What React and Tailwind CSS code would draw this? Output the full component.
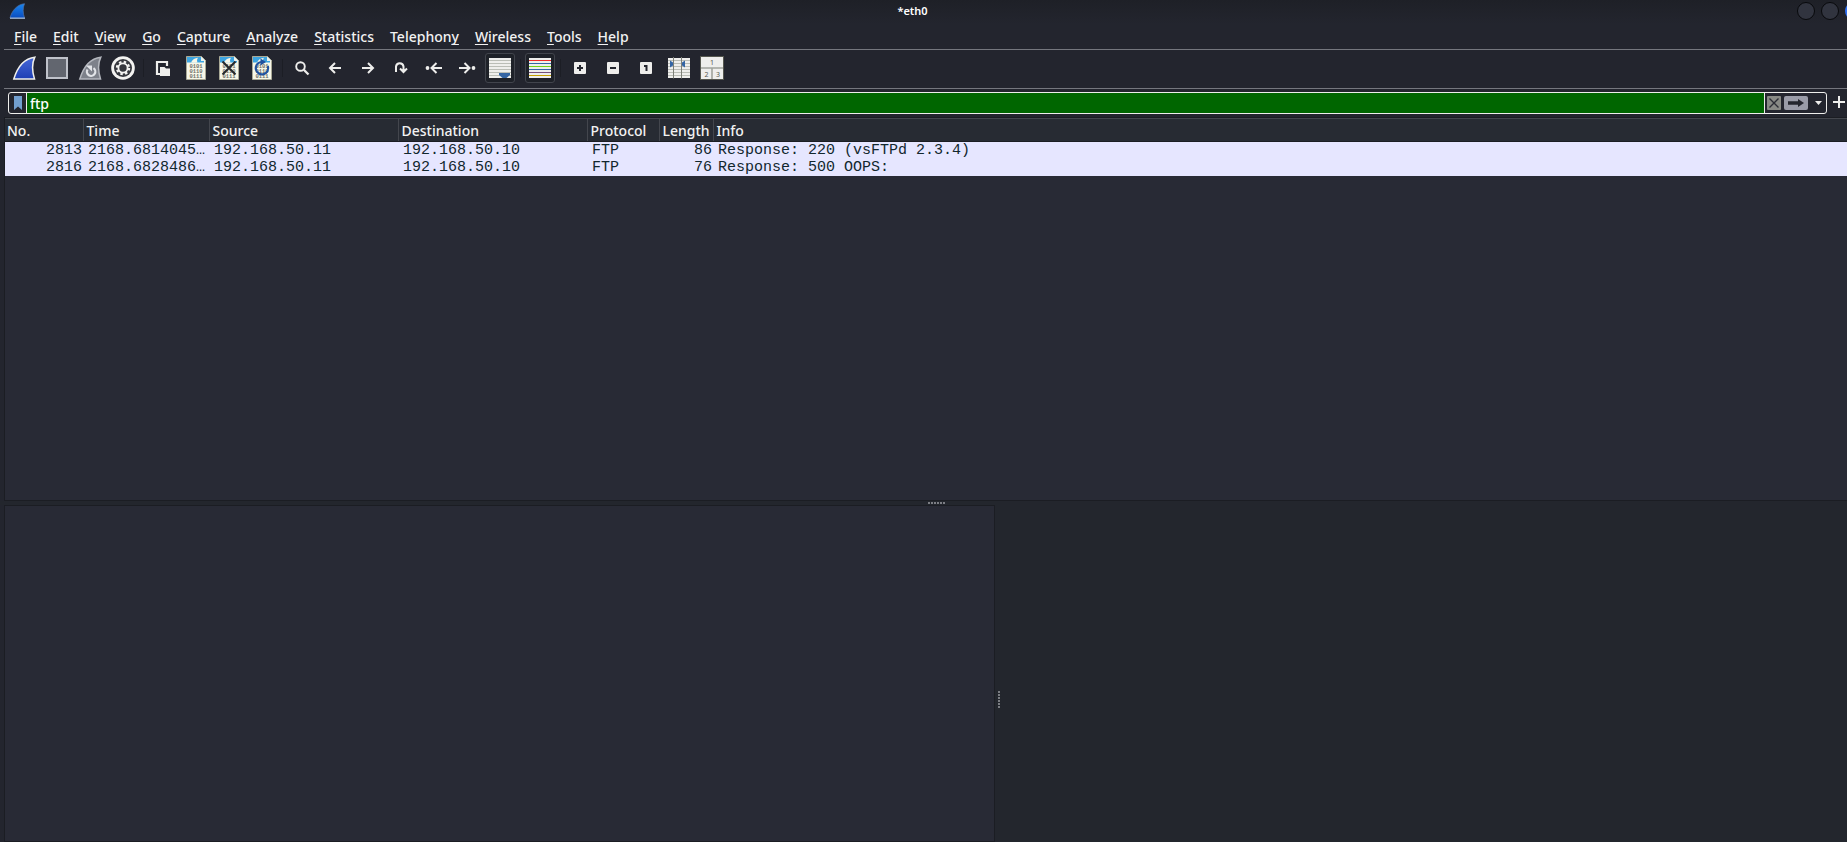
import React from 'react';

const UI = "font-['Noto_Sans',sans-serif]";

const menus = [
  ['', 'F', 'ile'],
  ['', 'E', 'dit'],
  ['', 'V', 'iew'],
  ['', 'G', 'o'],
  ['', 'C', 'apture'],
  ['', 'A', 'nalyze'],
  ['', 'S', 'tatistics'],
  ['Telephon', 'y', ''],
  ['', 'W', 'ireless'],
  ['', 'T', 'ools'],
  ['', 'H', 'elp'],
];

const packets = [
  ['2813', '2168.6814045…', '192.168.50.11', '192.168.50.10', 'FTP', '86', 'Response: 220 (vsFTPd 2.3.4)'],
  ['2816', '2168.6828486…', '192.168.50.11', '192.168.50.10', 'FTP', '76', 'Response: 500 OOPS:'],
];

const columns = [
  ['No.', 'w-[78px]', true],
  ['Time', 'w-[126px]', false],
  ['Source', 'w-[189px]', false],
  ['Destination', 'w-[189px]', false],
  ['Protocol', 'w-[72px]', false],
  ['Length', 'w-[54px]', true],
  ['Info', 'w-auto', false],
];

function Svg({ children, size = 24 }) {
  return (
    <svg width={size} height={size} viewBox={`0 0 ${size} ${size}`} fill="none" aria-hidden="true">
      {children}
    </svg>
  );
}

function AppFin() {
  return (
    <svg width="17" height="17" viewBox="0 0 17 17" aria-hidden="true">
      <defs>
        <linearGradient id="appfin" x1="0" y1="0" x2="0" y2="1">
          <stop offset="0" stopColor="#1a86ee" />
          <stop offset="1" stopColor="#0a4cc0" />
        </linearGradient>
      </defs>
      <path d="M1 15C3 7.500 8 1.500 15.500 0.700C13.600 5 13.800 10 15.500 15Z" fill="url(#appfin)" stroke="#4f74ad" strokeWidth="0.700" />
      <path d="M1 15.200H16" stroke="#a9bedb" strokeWidth="1.200" />
    </svg>
  );
}

function Fin() {
  return (
    <Svg>
      <defs>
        <linearGradient id="fin" x1="0" y1="0" x2="0" y2="1">
          <stop offset="0" stopColor="#4668d8" />
          <stop offset="1" stopColor="#1e3fb4" />
        </linearGradient>
      </defs>
      <path d="M1.800 23C5 12.500 10.500 2.500 22.800 1.200C19.500 8 20 15 22.500 23Z" fill="url(#fin)" stroke="#f0f0ec" strokeWidth="1.500" />
    </Svg>
  );
}

function Stop() {
  return (
    <Svg>
      <rect x="2" y="2" width="20" height="20" fill="#62666f" stroke="#bfc2ca" strokeWidth="2" />
    </Svg>
  );
}

function Restart() {
  return (
    <Svg>
      <path d="M1.800 23C5 12.500 10.500 2.500 22.800 1.200C19.500 8 20 15 22.500 23Z" fill="#7d818a" stroke="#b4b7be" strokeWidth="1.500" />
      <path d="M15.500 12.200A4.200 4.200 0 1 1 9.500 13.500" stroke="#e2e4e8" strokeWidth="2.200" />
      <path d="M8 9.500H14V15.500Z" fill="#e2e4e8" />
    </Svg>
  );
}

function Gear() {
  return (
    <Svg>
      <circle cx="12" cy="12" r="11.800" fill="#f3f3f1" />
      <circle cx="12" cy="12" r="9" fill="#35373d" />
      <circle cx="12" cy="12" r="6" stroke="#f3f3f1" strokeWidth="2.400" strokeDasharray="2.400 2.312" />
      <circle cx="12" cy="12" r="4.600" stroke="#f3f3f1" strokeWidth="1.800" />
      <circle cx="12" cy="12" r="2.800" fill="#35373d" />
    </Svg>
  );
}

function OpenFile() {
  return (
    <Svg>
      <path d="M9 18H6V6H16V10" stroke="#eeeeec" strokeWidth="2.200" />
      <path d="M9 11H13.500L15 12.500H19V20H9Z" fill="#eeeeec" />
    </Svg>
  );
}

function Doc({ kind }) {
  return (
    <Svg>
      <path d="M2.500 0.500H17.500L21.500 4.500V23.500H2.500Z" fill="#f7f7e8" stroke="#a9a996" />
      <path d="M3 1H17L20 5V6.500H13C11 6 9 6.500 7 6.500H3Z" fill="#3da4e0" />
      <path d="M7 6.600C8.500 3.500 11 2 14 1.800C12.800 3.500 12.800 5 13.500 6.600Z" fill="#f7f7e8" />
      <path d="M17 0.500L21.500 5H17Z" fill="#e9f1ee" />
      <g fill="#6f716a" fontFamily="Liberation Mono, monospace" fontSize="5.500" fontWeight="700" textAnchor="middle">
        <text x="12" y="12">0101</text>
        <text x="12" y="16.800">0110</text>
        <text x="12" y="21.600">0111</text>
      </g>
      {kind === 'close' && <path d="M5.500 5.500L18.500 18.500M18.500 5.500L5.500 18.500" stroke="#24282b" strokeWidth="2" />}
      {kind === 'reload' && (
        <>
          <path d="M17.800 10A6.200 6.200 0 1 1 11 6" stroke="#20529f" strokeWidth="2.200" />
          <path d="M10.500 2.500L16 6L10.500 9.500Z" fill="#20529f" />
        </>
      )}
    </Svg>
  );
}

function Search() {
  return (
    <Svg>
      <circle cx="10.500" cy="10.500" r="4.300" stroke="#eeeeec" strokeWidth="1.900" />
      <path d="M13.800 13.800L18.500 18.500" stroke="#eeeeec" strokeWidth="2.300" />
    </Svg>
  );
}

function Stroke({ d, dot }) {
  return (
    <Svg>
      <path d={d} stroke="#eeeeec" strokeWidth="2" />
      {dot && <circle cx={dot} cy="12" r="1.900" fill="#eeeeec" />}
    </Svg>
  );
}

function Lines({ rows }) {
  return (
    <>
      <rect x="1" y="2" width="22" height="20" fill="#eeeeec" />
      {rows.map(([y, c]) => (
        <rect key={y} x="1" y={y} width="22" height="1" fill={c} />
      ))}
    </>
  );
}

function AutoScroll() {
  return (
    <Svg>
      <Lines rows={[4, 7, 10, 13, 16, 19].map((y) => [y, '#babdb6'])} />
      <path d="M11 17H22V19L18.500 22H14.500L11 19Z" fill="#3465a4" />
    </Svg>
  );
}

function Colorize() {
  return (
    <Svg>
      <Lines rows={[[4, '#ef2929'], [7, '#3465a4'], [10, '#73d216'], [13, '#3465a4'], [16, '#75507b'], [19, '#c4a000']]} />
    </Svg>
  );
}

function Box({ kind }) {
  return (
    <Svg>
      <rect x="6" y="6" width="12" height="12" rx="1" fill="#eeeeec" />
      {kind === 'plus' && <path d="M9 12H15M12 9V15" stroke="#24262e" strokeWidth="2" />}
      {kind === 'minus' && <path d="M9 12H15" stroke="#24262e" strokeWidth="2" />}
      {kind === 'one' && <path d="M10 10H12.500V15" stroke="#24262e" strokeWidth="2" />}
    </Svg>
  );
}

function ResizeCols() {
  return (
    <Svg>
      <Lines rows={[4, 7, 10, 13, 16, 19].map((y) => [y, '#babdb6'])} />
      <path d="M6.500 1V22.500M14.500 1V22.500" stroke="#7d8078" />
      <path d="M3 4.500L6 6.500V9.500L3 11.500ZM18 4.500L15 6.500V9.500L18 11.500Z" fill="#3465a4" />
    </Svg>
  );
}

function Layout() {
  return (
    <Svg>
      <rect x="0.500" y="0.500" width="23" height="23" fill="#eeeeec" stroke="#55574f" />
      <path d="M1 12H23M12 12V23" stroke="#a0a39c" strokeWidth="1.600" />
      <g fill="#55574f" fontFamily="Noto Sans, sans-serif" fontSize="7" textAnchor="middle">
        <text x="12" y="9">1</text>
        <text x="6.500" y="20.500">2</text>
        <text x="18" y="20.500">3</text>
      </g>
    </Svg>
  );
}

const tools = [
  ['Start capture', <Fin />],
  ['Stop capture', <Stop />],
  ['Restart capture', <Restart />],
  ['Capture options', <Gear />],
  null,
  ['Open file', <OpenFile />],
  ['Save file', <Doc />],
  ['Close file', <Doc kind="close" />],
  ['Reload file', <Doc kind="reload" />],
  null,
  ['Find packet', <Search />],
  ['Previous packet', <Stroke d="M18 12H7M12 7L7 12L12 17" />],
  ['Next packet', <Stroke d="M6 12H17M12 7L17 12L12 17" />],
  ['Go to packet', <Stroke d="M7 16V10.500A3.800 4 0 0 1 14.500 10.500V16M11 12.500L14.500 16L18 12.500" />],
  ['First packet', <Stroke d="M20 12H10M14.500 7L9.500 12L14.500 17" dot={5.5} />],
  ['Last packet', <Stroke d="M4 12H14M9.500 7L14.500 12L9.500 17" dot={18.5} />],
  ['Auto scroll', <AutoScroll />, true],
  null,
  ['Colorize packets', <Colorize />, true],
  null,
  ['Zoom in', <Box kind="plus" />],
  ['Zoom out', <Box kind="minus" />],
  ['Normal size', <Box kind="one" />],
  ['Resize columns', <ResizeCols />],
  ['Reset layout', <Layout />],
];

function TitleBar() {
  return (
    <header className="flex h-6 items-center bg-gradient-to-b from-[#1e2027] to-[#23252e] pl-[9px]">
      <span className="pb-0.5">
        <AppFin />
      </span>
      <h1 className="flex-1 pb-0.5 pl-0.5 text-center text-[11px] leading-4 font-semibold text-white">*eth0</h1>
      <div className="-mr-4 flex shrink-0 gap-1.5 pb-0.5">
        <button aria-label="Minimize" className="size-[18px] rounded-full border border-[#08090c] bg-[#31343f]" />
        <button aria-label="Maximize" className="size-[18px] rounded-full border border-[#08090c] bg-[#31343f]" />
        <button aria-label="Close" className="size-[18px] rounded-full bg-[#2f6ff2]" />
      </div>
    </header>
  );
}

function MenuBar() {
  return (
    <nav className="ml-1 flex h-[26px] items-center gap-4 border-b border-[#75777e] pl-2.5">
      {menus.map(([a, b, c]) => (
        <button key={a + b + c} className="text-[14px] leading-5 font-medium">
          {a}
          <span className="underline decoration-1 underline-offset-2 [text-decoration-skip-ink:none]">{b}</span>
          {c}
        </button>
      ))}
    </nav>
  );
}

function ToolBar() {
  return (
    <div role="toolbar" className="ml-1 flex h-[39px] items-center gap-[3px] border-b border-[#75777e] pb-0.5 pl-[5px]">
      {tools.map((t, i) =>
        t ? (
          <button
            key={t[0]}
            aria-label={t[0]}
            className={
              'flex size-[30px] items-center justify-center ' +
              (t[2] ? 'rounded-[3px] border border-[#41444c] bg-[#1e2128]' : '')
            }
          >
            {t[1]}
          </button>
        ) : (
          <span key={i} className="flex w-1 justify-center">
            <span className="h-[18px] w-px bg-[#1c1e25]" />
          </span>
        )
      )}
    </div>
  );
}

function FilterBar() {
  return (
    <div className="flex h-7 items-center pl-2">
      <div className="flex h-[22px] flex-1 items-stretch overflow-hidden rounded-[3px] border border-[#eeeeec]">
        <button aria-label="Filter bookmarks" className="flex w-[18px] items-center justify-center border-r border-[#eeeeec]">
          <svg width="8" height="14" viewBox="0 0 8 14" aria-hidden="true">
            <path d="M0 0H8V14L4 10.500L0 14Z" fill="#729fcf" />
          </svg>
        </button>
        <input
          aria-label="Display filter"
          defaultValue="ftp"
          className="min-w-0 flex-1 bg-[#006600] px-[3px] pt-0.5 text-[14px] font-medium leading-5 text-white outline-none"
        />
        <div className="flex items-center gap-[3px] border-l border-[#eeeeec] pl-0.5">
          <button aria-label="Clear filter" className="flex size-3.5 items-center justify-center rounded-[1px] bg-[#888a85]">
            <svg width="10" height="10" viewBox="0 0 10 10" aria-hidden="true">
              <path d="M0.500 0.500L9.500 9.500M9.500 0.500L0.500 9.500" stroke="#2b2d35" strokeWidth="1.400" />
            </svg>
          </button>
          <button aria-label="Apply filter" className="flex h-3.5 w-6 items-center justify-center rounded-[2px] bg-[#9a9ca8]">
            <svg width="16" height="8" viewBox="0 0 16 8" aria-hidden="true">
              <path d="M0 2.300H10V0L16 4L10 8V5.700H0Z" fill="#24262e" />
            </svg>
          </button>
          <button aria-label="Recent filters" className="flex w-[15px] items-center justify-center">
            <svg width="7" height="4" viewBox="0 0 7 4" aria-hidden="true">
              <path d="M0 0H7L3.500 4Z" fill="#eeeeec" />
            </svg>
          </button>
        </div>
      </div>
      <button aria-label="Add filter button" className="flex w-5 justify-center pb-0.5 pl-1">
        <svg width="12" height="12" viewBox="0 0 12 12" aria-hidden="true">
          <path d="M6 0V12M0 6H12" stroke="#eeeeec" strokeWidth="2" />
        </svg>
      </button>
    </div>
  );
}

function PacketList() {
  return (
    <section className="ml-1 min-h-0 flex-[383] overflow-hidden border border-r-0 border-[#1b1d23] bg-[#282a35]">
      <table className="w-full table-fixed border-collapse">
        <thead>
          <tr className="h-[22px] bg-[#272b33]">
            {columns.map(([name, width], i) => (
              <th
                key={name}
                scope="col"
                className={
                  width +
                  ' border-t border-b border-t-[#43464d] border-b-[#1b1d23] p-0 pt-0.5 text-left text-[14px] leading-5 font-medium whitespace-nowrap ' +
                  (i === 0 ? 'pl-0.5 ' : 'pl-[3px] ') +
                  (i < columns.length - 1 ? 'border-r border-r-[#43464d]' : '')
                }
              >
                {name}
              </th>
            ))}
          </tr>
        </thead>
        <tbody className="bg-[#e6e6ff] font-['Liberation_Mono',monospace] text-[15px] leading-[17px] text-[#12272e]">
          {packets.map((p) => (
            <tr key={p[0]}>
              {p.map((v, i) => (
                <td
                  key={i}
                  className={'p-0 pr-px pl-[5px] whitespace-nowrap ' + (columns[i][2] ? 'text-right' : 'text-left')}
                >
                  {v}
                </td>
              ))}
            </tr>
          ))}
        </tbody>
      </table>
    </section>
  );
}

function Dots({ className }) {
  return (
    <span className={'flex gap-px ' + className}>
      {[0, 1, 2, 3, 4, 5].map((i) => (
        <span key={i} className="size-0.5 bg-[#7b7d83]" />
      ))}
    </span>
  );
}

export default function App() {
  return (
    <div className={'flex h-screen flex-col overflow-hidden bg-[#23252e] text-[#f2f2f2] ' + UI}>
      <TitleBar />
      <MenuBar />
      <ToolBar />
      <FilterBar />
      <PacketList />
      <div role="separator" className="flex h-1 items-center justify-center bg-[#23262d] pl-[26px]">
        <Dots className="" />
      </div>
      <main className="ml-1 flex min-h-0 flex-[338] bg-[#23262d]">
        <section aria-label="Packet details" className="flex-[992] border border-[#1b1d23] bg-[#282a35]" />
        <div className="flex flex-[851] pt-[186px] pl-[3px]">
          <Dots className="flex-col" />
        </div>
      </main>
    </div>
  );
}
